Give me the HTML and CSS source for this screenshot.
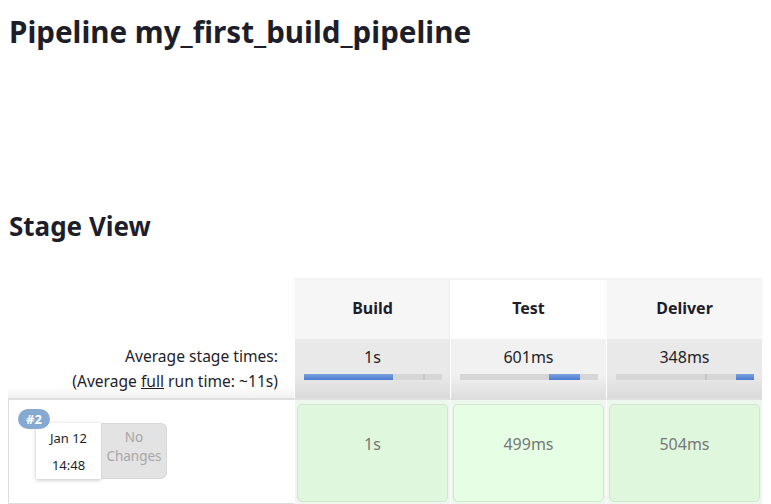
FILE: index.html
```html
<!DOCTYPE html>
<html lang="en">
<head>
    <meta charset="UTF-8">
    <title>Pipeline my_first_build_pipeline</title>
    <link rel="stylesheet" href="styles.css">
</head>
<body>

<h1 class="page-title">Pipeline my_first_build_pipeline</h1>

<!-- space left for the pipeline graph -->
<div class="graph-space"></div>

<h2 class="section-title">Stage View</h2>

<table class="stage-view">
    <colgroup>
        <col class="col-info">
        <col class="col-stage">
        <col class="col-stage">
        <col class="col-stage">
    </colgroup>
    <tr class="stage-headers">
        <td class="corner"></td>
        <th class="stage-name">Build</th>
        <th class="stage-name alt">Test</th>
        <th class="stage-name">Deliver</th>
    </tr>
    <tr class="averages">
        <td class="avg-label">
            Average stage times:<br>
            (Average <u>full</u> run time: ~11s)
        </td>
        <td class="avg">
            <div class="avg-time">1s</div>
            <div class="bar"><span class="fill" style="left: 0; width: 89px;"></span><span class="tick" style="left: 119px;"></span></div>
        </td>
        <td class="avg alt">
            <div class="avg-time">601ms</div>
            <div class="bar"><span class="fill" style="left: 89px; width: 31px;"></span></div>
        </td>
        <td class="avg">
            <div class="avg-time">348ms</div>
            <div class="bar"><span class="tick" style="left: 89px;"></span><span class="fill" style="left: 120px; width: 18px;"></span></div>
        </td>
    </tr>
    <tr class="job">
        <td class="job-info">
            <div class="job-wrap">
                <span class="badge">#2</span>
                <div class="job-date">
                    <div>Jan 12</div>
                    <div class="job-time">14:48</div>
                </div>
                <div class="changes">No<br>Changes</div>
            </div>
        </td>
        <td class="stage-cell"><div class="result">1s</div></td>
        <td class="stage-cell"><div class="result alt">499ms</div></td>
        <td class="stage-cell"><div class="result">504ms</div></td>
    </tr>
    <tr class="next-job">
        <td class="next-info"></td>
        <td></td>
        <td></td>
        <td></td>
    </tr>
</table>

</body>
</html>
```

FILE: styles.css
```css
body {
    margin: 0;
    padding: 0 8px;
    font-family: 'Noto Sans', 'Open Sans', sans-serif;
    color: #1e1e2a;
    background-color: #ffffff;
    overflow: hidden;
}

.page-title {
    margin: 0;
    padding-top: 12px;
    font-size: 29.6px;
    font-weight: bold;
    line-height: 40px;
    padding-left: 1px;
}

.graph-space {
    height: 156px;
}

.section-title {
    margin: 0;
    font-size: 26px;
    font-weight: bold;
    line-height: 36px;
    padding-left: 1px;
}

.stage-view {
    margin-top: 36px;
    width: 754px;
    table-layout: fixed;
    border-collapse: separate;
    border-spacing: 0;
}

.col-info {
    width: 286px;
}

.col-stage {
    width: 156px;
}

.stage-view td, .stage-view th {
    padding: 0;
}

.stage-name {
    height: 59px;
    background-color: #f6f6f6;
    border-left: 1px solid #ffffff;
    font-size: 16px;
    font-weight: bold;
    text-align: center;
    box-shadow: 0 -2px 3px rgba(0, 0, 0, 0.06);
    padding-bottom: 4px !important;
    box-sizing: border-box;
}

.stage-name.alt {
    background-color: #ffffff;
}

.averages td {
    height: 59px;
}

.avg-label {
    text-align: right;
    padding-right: 16px !important;
    font-size: 15.6px;
    line-height: 25px;
    background: linear-gradient(#ffffff 80%, #f1f1f1);
    border-bottom: 2px solid #dedede;
    vertical-align: top;
    padding-top: 5px !important;
    height: 52px !important;
}

.avg {
    background: linear-gradient(#e9e9e9 60%, #dadada);
    border-left: 1px solid #ffffff;
    border-bottom: 2px solid #dedede;
    text-align: center;
    vertical-align: top;
}

.avg.alt {
    background: linear-gradient(#f1f1f1 60%, #dedede);
}

.avg-time {
    font-size: 16px;
    line-height: 20px;
    padding-top: 8px;
}

.bar {
    position: relative;
    width: 138px;
    height: 6px;
    margin: 7px auto 0;
    background-color: #d6d6d6;
}

.fill {
    position: absolute;
    top: 0;
    height: 6px;
    background: linear-gradient(#7ba1de, #4a7bd0);
}

.tick {
    position: absolute;
    top: 0;
    width: 2px;
    height: 6px;
    background-color: #c6c6c6;
}

.job td {
    height: 101px;
}

.job-info {
    border-left: 1px solid #dddddd;
    border-bottom: 1px solid #dddddd;
    vertical-align: top;
}

.job-wrap {
    position: relative;
    display: flex;
    margin: 23px 0 0 27px;
}

.badge {
    position: absolute;
    left: -18px;
    top: -14px;
    padding: 0 8px;
    height: 20px;
    line-height: 20px;
    border-radius: 10px;
    background-color: #85a9d1;
    color: #ffffff;
    font-size: 13px;
    font-weight: bold;
}

.job-date {
    width: 65px;
    height: 56px;
    background-color: #ffffff;
    box-shadow: 0 1px 4px rgba(0, 0, 0, 0.25);
    font-size: 13px;
    text-align: center;
    line-height: 27px;
    padding-top: 2px;
    box-sizing: border-box;
}

.changes {
    width: 66px;
    height: 56px;
    box-sizing: border-box;
    padding-top: 4px;
    background-color: #e3e3e3;
    border: 1px solid #d8d8d8;
    border-radius: 0 6px 6px 0;
    color: #a6a6a6;
    font-size: 13.5px;
    line-height: 19px;
    text-align: center;
}

.stage-cell {
    background-color: #eef7ee;
    border-left: 1px solid #ffffff;
    padding: 2px 2px 1px !important;
}

.result {
    height: 96px;
    line-height: 78px;
    border: 1px solid #d2e4d0;
    border-radius: 5px;
    background-color: #dff8dd;
    color: #777777;
    font-size: 16px;
    text-align: center;
}

.result.alt {
    background-color: #e6ffe4;
}

.next-job td {
    height: 20px;
}

.next-info {
    background-color: #fde8e4;
}
```
